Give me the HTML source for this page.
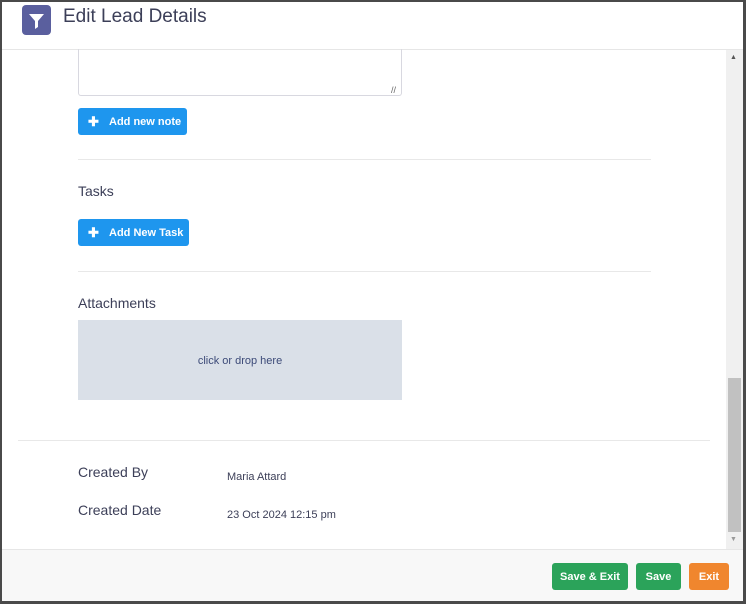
<!DOCTYPE html>
<html><head><style>
*{box-sizing:border-box;margin:0;padding:0}
body{width:746px;height:604px;background:#4a4a4a;position:relative;overflow:hidden;font-family:"Liberation Sans",sans-serif;color:#3a3f5c}
.modal{position:absolute;left:2px;top:2px;width:741px;height:599px;background:#fff}
.hdr{position:absolute;left:0;top:0;width:741px;height:48px;border-bottom:1px solid #e6e6e6;background:#fff}
.ico{position:absolute;left:20px;top:3px;width:29px;height:30px;background:#5a5f9e;border-radius:4px}
.title{position:absolute;left:61px;top:4px;font-size:19px;color:#3c3f58}
.abs{position:absolute}
.btn{position:absolute;background:#1e96ee;color:#fff;font-size:11px;font-weight:bold;border-radius:3px;height:27px;line-height:28px}
.btn .p{position:absolute;left:10px;top:0;font-size:13px}
.hr{position:absolute;height:1px;background:#e8e8e8}
.lbl{position:absolute;font-size:14px;color:#3c3f58}
.val{position:absolute;font-size:11px;color:#3c3f58}
.foot{position:absolute;left:0;top:547px;width:741px;height:52px;background:#f8f8f8;border-top:1px solid #e6e6e6}
.fb{position:absolute;top:13px;height:27px;line-height:28px;color:#fff;font-size:11px;font-weight:bold;text-align:center;border-radius:3px}
</style></head><body>
<div class="modal">
 <div class="hdr">
  <div class="ico"><svg width="29" height="30" viewBox="0 0 29 30"><path d="M7 9h15l-6 7v6l-3 2v-8z" fill="#fff"/></svg></div>
  <div class="title">Edit Lead Details</div>
 </div>
 <div class="abs" style="left:76px;top:47px;width:324px;height:47px;border:1px solid #d8d8e0;border-top:none;border-radius:0 0 3px 3px"></div>
 <div class="abs" style="left:389px;top:83px;font-size:9px;color:#666">//</div>
 <div class="btn" style="left:76px;top:106px;width:109px"><span class="p">✚</span><span style="position:absolute;left:31px">Add new note</span></div>
 <div class="hr" style="left:76px;top:157px;width:573px"></div>
 <div class="lbl" style="left:76px;top:181px">Tasks</div>
 <div class="btn" style="left:76px;top:217px;width:111px"><span class="p">✚</span><span style="position:absolute;left:31px">Add New Task</span></div>
 <div class="hr" style="left:76px;top:269px;width:573px"></div>
 <div class="lbl" style="left:76px;top:293px">Attachments</div>
 <div class="abs" style="left:76px;top:318px;width:324px;height:80px;background:#dae0e8;text-align:center;line-height:82px;font-size:11px;color:#3c4a78">click or drop here</div>
 <div class="hr" style="left:16px;top:438px;width:692px"></div>
 <div class="lbl" style="left:76px;top:462px">Created By</div>
 <div class="val" style="left:225px;top:469px">Maria Attard</div>
 <div class="lbl" style="left:76px;top:500px">Created Date</div>
 <div class="val" style="left:225px;top:507px">23 Oct 2024 12:15 pm</div>
 <div class="abs" style="left:724px;top:48px;width:17px;height:499px;background:#f0f0f0"></div>
 <div class="abs" style="left:728px;top:52px;font-size:7px;color:#555">▲</div>
 <div class="abs" style="left:726px;top:376px;width:13px;height:154px;background:#c1c1c1"></div>
 <div class="abs" style="left:728px;top:534px;font-size:7px;color:#999">▼</div>
 <div class="foot">
  <div class="fb" style="left:550px;width:76px;background:#2ba35a">Save &amp; Exit</div>
  <div class="fb" style="left:634px;width:45px;background:#2ba35a">Save</div>
  <div class="fb" style="left:687px;width:40px;background:#f0862e">Exit</div>
 </div>
</div>
</body></html>
